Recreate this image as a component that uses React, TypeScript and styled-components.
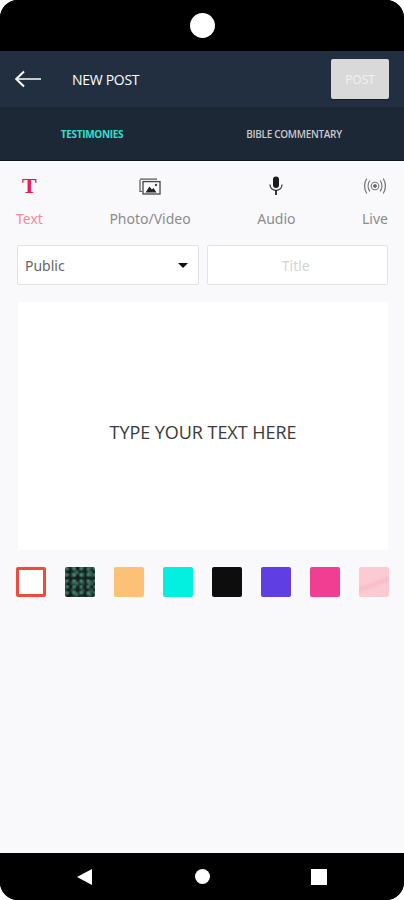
import React from 'react';
import styled, { createGlobalStyle } from 'styled-components';

const GlobalStyle = createGlobalStyle`
  html, body {
    margin: 0;
    padding: 0;
    background: #ffffff;
  }
  * {
    box-sizing: border-box;
  }
`;

const MARBLE = `radial-gradient(circle at 30% 30%, #4d8a78 0, transparent 45%) 0 0 / 7px 6px,
  radial-gradient(circle at 70% 60%, #2f6355 0, transparent 50%) 2px 3px / 9px 8px,
  radial-gradient(circle at 50% 40%, #3c7565 0, transparent 40%) 5px 1px / 13px 11px,
  #14201e`;

const SWATCHES = [
  { id: 'white', fill: '#ffffff', border: '3px solid #ee4a40' },
  { id: 'marble', fill: MARBLE },
  { id: 'orange', fill: '#fdc077' },
  { id: 'cyan', fill: '#03efe0' },
  { id: 'black', fill: '#0e0d0e' },
  { id: 'violet', fill: '#5f3fe4' },
  { id: 'pink', fill: '#f03f93' },
  {
    id: 'blush',
    fill: `linear-gradient(160deg, transparent 45%, #f9bdc8 55%, transparent 68%), #fbcad2`,
  },
];

const PhotoIcon = () => (
  <svg width="22" height="18" viewBox="0 0 22 18" fill="none">
    <path d="M1 3v11.5h2" stroke="#555" strokeWidth="1.2" />
    <path d="M1 2.2h17" stroke="#555" strokeWidth="1.2" />
    <rect x="4" y="4.6" width="17" height="12.4" stroke="#444" strokeWidth="1.3" />
    <path d="M6.5 15.5l4-6 2.4 3 1.6-1.6 3 4.6z" fill="#222" />
    <circle cx="17" cy="8" r="1.2" fill="#444" />
  </svg>
);

const MicIcon = () => (
  <svg width="16" height="20" viewBox="0 0 16 20" fill="none">
    <rect x="5" y="0.5" width="6" height="11.5" rx="3" fill="#1b1b1b" />
    <path d="M2 8.5c0 3.6 2.6 5.8 6 5.8s6-2.2 6-5.8" stroke="#444" strokeWidth="1.3" />
    <path d="M8 14v5" stroke="#222" strokeWidth="1.8" />
  </svg>
);

const LiveIcon = () => (
  <svg width="24" height="18" viewBox="0 0 24 18" fill="none" stroke="#777">
    <circle cx="12" cy="9" r="1.5" fill="#666" strokeWidth="1" />
    <circle cx="12" cy="9" r="3.8" strokeWidth="1.1" />
    <path d="M6.800 3.500c-2.200 3.200-2.200 7.800 0 11" strokeWidth="1.300" />
    <path d="M3.800 1.500c-3 4.400-3 10.600 0 15" strokeWidth="1.300" />
    <path d="M17.200 3.500c2.200 3.200 2.200 7.800 0 11" strokeWidth="1.300" />
    <path d="M20.200 1.500c3 4.400 3 10.600 0 15" strokeWidth="1.300" />
  </svg>
);

const BackArrow = () => (
  <svg width="28" height="18" viewBox="0 0 28 18" fill="none" stroke="#ffffff">
    <path d="M2 9h25" strokeWidth="1.6" />
    <path d="M10 1.500L2.200 9l7.800 7.500" strokeWidth="2" />
  </svg>
);

export default function App() {
  return (
    <>
      <GlobalStyle />
      <Phone>
        <StatusBar>
          <Camera />
        </StatusBar>
        <Header>
          <BackButton>
            <BackArrow />
          </BackButton>
          <HeaderTitle>NEW POST</HeaderTitle>
          <PostButton>POST</PostButton>
        </Header>
        <Tabs>
          <Tab $active>TESTIMONIES</Tab>
          <Tab>BIBLE COMMENTARY</Tab>
        </Tabs>
        <Content>
          <TypeRow>
            <TypeItem>
              <TypeIcon>
                <SerifT>T</SerifT>
              </TypeIcon>
              <TypeLabel $active>Text</TypeLabel>
            </TypeItem>
            <TypeItem>
              <TypeIcon>
                <PhotoIcon />
              </TypeIcon>
              <TypeLabel>Photo/Video</TypeLabel>
            </TypeItem>
            <TypeItem>
              <TypeIcon>
                <MicIcon />
              </TypeIcon>
              <TypeLabel>Audio</TypeLabel>
            </TypeItem>
            <TypeItem>
              <TypeIcon>
                <LiveIcon />
              </TypeIcon>
              <TypeLabel>Live</TypeLabel>
            </TypeItem>
          </TypeRow>
          <FieldRow>
            <Field>
              <FieldValue>Public</FieldValue>
              <Caret />
            </Field>
            <Field $center>
              <Placeholder>Title</Placeholder>
            </Field>
          </FieldRow>
          <TextCard>TYPE YOUR TEXT HERE</TextCard>
          <SwatchRow>
            {SWATCHES.map((s) => (
              <Swatch key={s.id} $fill={s.fill} $border={s.border} />
            ))}
          </SwatchRow>
        </Content>
        <NavBar>
          <NavBack />
          <NavHome />
          <NavRecent />
        </NavBar>
      </Phone>
    </>
  );
}

const Phone = styled.div`
  width: 404px;
  height: 900px;
  display: flex;
  flex-direction: column;
  overflow: hidden;
  border-radius: 18px;
  background: #000;
  font-family: 'Open Sans', 'Liberation Sans', sans-serif;
`;

const StatusBar = styled.div`
  height: 51px;
  flex: none;
  background: #000;
  display: flex;
  align-items: center;
  justify-content: center;
  padding-bottom: 1px;
`;

const Camera = styled.div`
  width: 25px;
  height: 25px;
  border-radius: 50%;
  background: #fff;
`;

const Header = styled.header`
  height: 56px;
  flex: none;
  background: #222f40;
  display: flex;
  align-items: center;
  padding: 0 15px 0 14px;
`;

const BackButton = styled.div`
  width: 58px;
  display: flex;
  align-items: center;
  margin-top: -1px;
`;

const HeaderTitle = styled.div`
  flex: 1;
  color: #fff;
  font-size: 14px;
  font-weight: 400;
  letter-spacing: -0.3px;
`;

const PostButton = styled.button`
  width: 58px;
  height: 40px;
  border: none;
  padding: 0;
  border-radius: 2px;
  background: #d9d9d9;
  color: #f2f2f2;
  font-family: inherit;
  font-size: 12px;
  box-shadow: 0 1px 1px rgba(0, 0, 0, 0.4);
`;

const Tabs = styled.nav`
  height: 54px;
  flex: none;
  display: flex;
  align-items: center;
  background: #1c2835;
  border-bottom: 1px solid #10161d;
`;

const Tab = styled.div<{ $active?: boolean }>`
  flex: 1;
  text-align: center;
  font-size: 10px;
  font-weight: ${(p) => (p.$active ? 700 : 600)};
  letter-spacing: -0.3px;
  color: ${(p) => (p.$active ? '#2fe0cf' : '#c9cbcd')};
  &:first-child {
    flex: 0 0 184px;
  }
`;

const Content = styled.main`
  flex: 1;
  background: #f9f9fc;
  display: flex;
  flex-direction: column;
  padding: 13px 16px 0;
`;

const TypeRow = styled.div`
  display: flex;
  justify-content: space-between;
`;

const TypeItem = styled.div`
  display: flex;
  flex-direction: column;
  align-items: center;
  gap: 11px;
`;

const TypeIcon = styled.div`
  height: 24px;
  display: flex;
  align-items: center;
  justify-content: center;
`;

const SerifT = styled.span`
  font-family: 'Liberation Serif', serif;
  font-weight: 700;
  font-size: 22px;
  line-height: 24px;
  color: #ee1750;
`;

const TypeLabel = styled.div<{ $active?: boolean }>`
  font-family: 'Noto Sans', 'Liberation Sans', sans-serif;
  font-size: 14px;
  line-height: 20px;
  color: ${(p) => (p.$active ? '#f58a99' : '#8c8c8c')};
`;

const FieldRow = styled.div`
  display: flex;
  gap: 8px;
  margin-top: 16px;
  padding-left: 1px;
`;

const Field = styled.div<{ $center?: boolean }>`
  flex: 1;
  height: 40px;
  background: #fff;
  border: 1px solid #e2e3e6;
  border-radius: 2px;
  display: flex;
  align-items: center;
  justify-content: ${(p) => (p.$center ? 'center' : 'space-between')};
  padding: 0 10px 0 7px;
`;

const FieldValue = styled.span`
  font-family: 'Noto Sans', 'Liberation Sans', sans-serif;
  font-size: 14px;
  color: #666;
`;

const Placeholder = styled.span`
  font-family: 'Noto Sans', 'Liberation Sans', sans-serif;
  font-size: 14px;
  color: #d4d4d4;
`;

const Caret = styled.span`
  width: 0;
  height: 0;
  border-left: 5px solid transparent;
  border-right: 5px solid transparent;
  border-top: 5px solid #111;
`;

const TextCard = styled.div`
  height: 248px;
  margin: 17px 0 0 2px;
  padding-top: 12px;
  background: #fff;
  display: flex;
  align-items: center;
  justify-content: center;
  color: #3a3a3a;
  font-size: 18px;
  letter-spacing: -0.05px;
`;

const SwatchRow = styled.div`
  display: flex;
  justify-content: space-between;
  margin: 17px -1px 0 0;
`;

const Swatch = styled.div<{ $fill: string; $border?: string }>`
  width: 30px;
  height: 30px;
  border-radius: 2px;
  background: ${(p) => p.$fill};
  border: ${(p) => p.$border ?? 'none'};
`;

const NavBar = styled.div`
  height: 47px;
  flex: none;
  background: #000;
  display: flex;
  align-items: center;
  justify-content: center;
  gap: 101px;
`;

const NavBack = styled.div`
  width: 0;
  height: 0;
  border-top: 8.5px solid transparent;
  border-bottom: 8.5px solid transparent;
  border-right: 15px solid #fff;
`;

const NavHome = styled.div`
  width: 15px;
  height: 15px;
  margin-left: 2px;
  border-radius: 50%;
  background: #fff;
`;

const NavRecent = styled.div`
  width: 16px;
  height: 16px;
  background: #fff;
`;
